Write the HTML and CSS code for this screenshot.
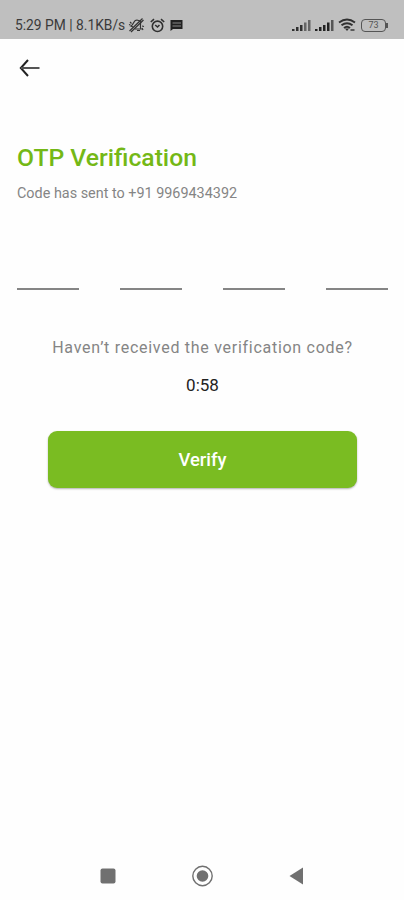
FILE: index.html
```html
<!DOCTYPE html>
<html lang="en">
<head>
  <meta charset="UTF-8">
  <meta name="viewport" content="width=device-width, initial-scale=1">
  <title>OTP Verification</title>
  <link rel="stylesheet" href="styles.css">
</head>
<body>

  <!-- Status bar -->
  <header class="status-bar">
    <div class="status-left">
      <span class="status-text">5:29 PM | 8.1KB/s</span>
      <!-- Muted bell -->
      <svg class="icon-mute" width="17" height="16" viewBox="0 0 17 16" fill="none" stroke="#333" stroke-width="1.2">
        <path d="M5 10 L3 9 C6 8 5 3 9 3 L12 4 C14 6 11 9 13 12 L7 12"/>
        <path d="M1.5 14 L14.5 1.5 M3 15 L15.5 3"/>
        <path d="M2 5 L3.5 6.5 M1 7.5 L2.5 8 M14 9 L16 9.5 M14 11 L15 13 M9 13.5 H12"/>
      </svg>
      <!-- Alarm -->
      <svg class="icon-alarm" width="15" height="15" viewBox="0 0 15 15" fill="none" stroke="#303030" stroke-width="1.6">
        <circle cx="7.5" cy="8.3" r="5.2"/>
        <path d="M0.8 4 L4 1.2 M14.2 4 L11 1.2 M5.2 7 L7.5 9 L9.5 7"/>
      </svg>
      <!-- Message -->
      <svg class="icon-message" width="13" height="12" viewBox="0 0 13 12">
        <path d="M0.5 1 H12.5 V10 H3 L0.5 12 Z" fill="#222"/>
        <path d="M2.5 4 H11 M2.5 7 H11" stroke="#888" stroke-width="1"/>
      </svg>
    </div>
    <div class="status-right">
      <svg width="19" height="13" viewBox="0 0 19 13" fill="#303030">
        <path d="M0 10h2.5v2H0zM4 8h2.5v4H4zM8 6h2.5v6H8z"/>
        <path d="M12 3.5h2.5V12H12zM16 1h2.5v11H16z" fill="#666"/>
      </svg>
      <svg class="signal-second" width="19" height="13" viewBox="0 0 19 13" fill="#222">
        <path d="M0 10h2.5v2H0zM4 8h2.5v4H4zM8 6h2.5v6H8zM12 3.5h2.5V12H12z"/>
        <path d="M16 1h2.5v11H16z" fill="#555"/>
      </svg>
      <svg class="icon-wifi" width="18" height="14" viewBox="0 0 18 14" fill="none" stroke="#303030" stroke-width="1.9">
        <path d="M1 4.5 Q9 -1.5 17 4.5 M3.5 7.3 Q9 3 14.5 7.3 M6 10 Q9 7.5 12 10"/>
        <path d="M7 10.5 H11 L9 13 Z" fill="#303030" stroke="none"/>
        <path d="M12.5 12 H16.5" stroke="#555"/>
      </svg>
      <div class="battery"><span>73</span></div>
    </div>
  </header>

  <main class="screen">
    <button class="back-btn" type="button" aria-label="Back">
      <svg width="21" height="18" viewBox="0 0 21 18" fill="none" stroke="#222" stroke-width="2">
        <path d="M9 1 L1.8 9 L9 17"/>
        <path d="M2 9 H20.5" stroke="#555"/>
      </svg>
    </button>

    <h1 class="title">OTP Verification</h1>
    <p class="subtitle">Code has sent to +91 9969434392</p>

    <form id="otpForm">
      <div class="otp-inputs">
        <input type="text" maxlength="1" inputmode="numeric" aria-label="Digit 1">
        <input type="text" maxlength="1" inputmode="numeric" aria-label="Digit 2">
        <input type="text" maxlength="1" inputmode="numeric" aria-label="Digit 3">
        <input type="text" maxlength="1" inputmode="numeric" aria-label="Digit 4">
      </div>
      <p class="resend">Haven’t received the verification code?</p>
      <p class="timer">0:58</p>
      <button type="submit" class="btn">Verify</button>
    </form>
  </main>

  <!-- System navigation -->
  <nav class="nav-bar">
    <svg width="22" height="22" viewBox="0 0 22 22">
      <rect x="3.5" y="3.5" width="15" height="15" rx="2" fill="#707070"/>
    </svg>
    <svg width="22" height="22" viewBox="0 0 22 22">
      <circle cx="10.5" cy="11" r="9.7" fill="none" stroke="#707070" stroke-width="1.4"/>
      <circle cx="10.5" cy="11" r="5.8" fill="#707070"/>
    </svg>
    <svg width="22" height="22" viewBox="0 0 22 22">
      <path d="M3.5 11 L17 2.5 V19.5 Z" fill="#707070"/>
    </svg>
  </nav>

</body>
</html>
```

FILE: styles.css
```css
/* Basic Reset */
* {
  box-sizing: border-box;
  margin: 0;
  padding: 0;
}

body {
  font-family: Roboto, "Liberation Sans", sans-serif;
  background-color: #fefefe;
  display: flex;
  flex-direction: column;
  height: 100vh;
}

svg {
  display: block;
}

/* Status bar */
.status-bar {
  display: flex;
  justify-content: space-between;
  height: 39px;
  padding: 11px 16px 0 15px;
  background-color: #bfbfbf;
}

.status-left,
.status-right {
  display: flex;
  align-items: center;
  height: 28px;
}

.status-text {
  font-size: 13.8px;
  color: #3a3a3a;
  white-space: nowrap;
}

.icon-mute {
  margin-left: 3px;
}

.icon-alarm {
  margin-left: 5px;
}

.icon-message {
  margin-left: 5px;
}

.signal-second {
  margin-left: 4px;
}

.icon-wifi {
  margin-left: 4px;
}

.battery {
  position: relative;
  width: 25px;
  height: 13px;
  margin: 0 2px 0 5px;
  border: 1.5px solid #555;
  border-radius: 4px;
  font-size: 9px;
  line-height: 11px;
  text-align: center;
  color: #555;
}

.battery::after {
  content: "";
  position: absolute;
  right: -3px;
  top: 3px;
  width: 2px;
  height: 5px;
  background-color: #555;
}

/* Content */
.screen {
  flex: 1;
  padding: 20px 16px 0 17px;
}

.back-btn {
  display: block;
  margin-left: 2px;
  border: none;
  background: none;
}

.title {
  margin-top: 65px;
  font-size: 24.7px;
  font-weight: 500;
  line-height: 32px;
  color: #74b816;
}

.subtitle {
  margin-top: 10px;
  font-size: 14.4px;
  line-height: 20px;
  color: #858585;
}

.otp-inputs {
  display: flex;
  justify-content: space-between;
  margin-top: 45px;
}

.otp-inputs input {
  width: 62px;
  height: 41px;
  border: none;
  border-bottom: 2px solid #858585;
  background: none;
  font-size: 20px;
  text-align: center;
  outline: none;
}

.resend {
  margin-top: 47px;
  font-size: 16px;
  line-height: 22px;
  letter-spacing: 0.72px;
  text-align: center;
  color: #858585;
}

.timer {
  margin-top: 15px;
  font-size: 17px;
  line-height: 22px;
  text-align: center;
  color: #222;
}

.btn {
  display: block;
  width: 309px;
  height: 57px;
  margin: 35px auto 0;
  border: none;
  border-radius: 9px;
  background-color: #7abc22;
  box-shadow: 0 1px 2px rgba(0, 0, 0, 0.3);
  color: #fff;
  font-family: inherit;
  font-size: 18.4px;
  font-weight: 500;
}

/* System navigation */
.nav-bar {
  display: flex;
  justify-content: space-between;
  height: 35px;
  padding: 0 96px 0 97px;
}
```
